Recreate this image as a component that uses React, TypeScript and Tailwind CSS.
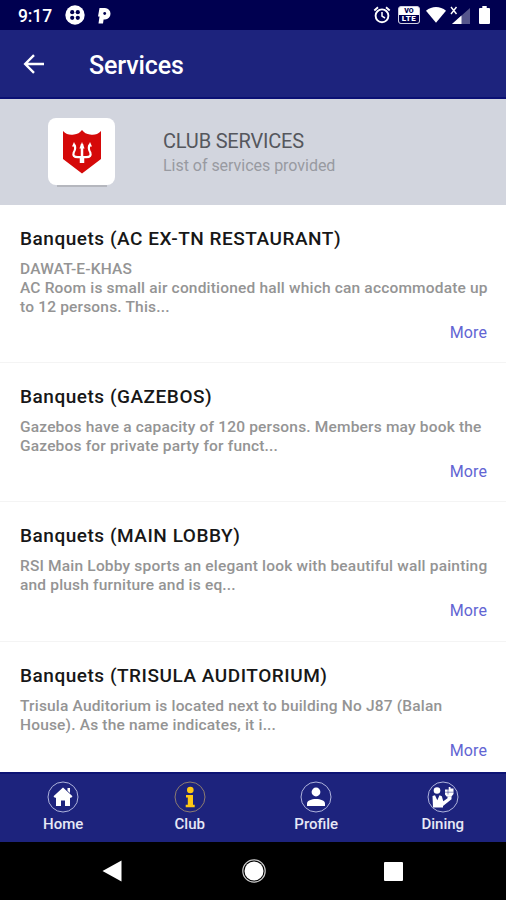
import React from "react";

type Service = { title: string; lines: string[]; height: string };

const services: Service[] = [
  {
    title: "Banquets (AC EX-TN RESTAURANT)",
    lines: ["DAWAT-E-KHAS", "AC Room is small air conditioned hall which can accommodate up", "to 12 persons. This..."],
    height: "h-[158px]",
  },
  {
    title: "Banquets (GAZEBOS)",
    lines: ["Gazebos have a capacity of 120 persons. Members may book the", "Gazebos for private party for funct..."],
    height: "h-[139px]",
  },
  {
    title: "Banquets (MAIN LOBBY)",
    lines: ["RSI Main Lobby sports an elegant look with beautiful wall painting", "and plush furniture and is eq..."],
    height: "h-[140px]",
  },
  {
    title: "Banquets (TRISULA AUDITORIUM)",
    lines: ["Trisula Auditorium is located next to building No J87 (Balan", "House). As the name indicates, it i..."],
    height: "h-[139px]",
  },
];

function StatusBar() {
  return (
    <div className="flex h-[30px] shrink-0 items-center bg-[#000050] pl-[18px] pr-[16px] text-white">
      <span className="mt-[2px] w-[34px] whitespace-nowrap text-[17.5px] font-medium leading-[30px] tracking-[-0.1px]">9:17</span>
      <svg className="ml-[13px]" width="20" height="20" viewBox="0 0 20 20">
        <circle cx="10" cy="10" r="9.700" fill="#fff" />
        <g fill="#000050">
          <circle cx="7.200" cy="7.200" r="2.100" />
          <circle cx="12.800" cy="7.200" r="2.100" />
          <circle cx="7.200" cy="12.800" r="2.100" />
          <circle cx="12.800" cy="12.800" r="2.100" />
        </g>
      </svg>
      <svg className="ml-[13px] mt-[1px]" width="13" height="16" viewBox="0 0 13 16">
        <path d="M1.500 0H7a5.500 5.700 0 0 1 0 11.400H5.600L5 15.500H.500L1.500 8.500H0Z" fill="#fff" />
        <circle cx="6.700" cy="5.500" r="1.400" fill="#000050" />
      </svg>
      <svg className="ml-auto" width="18" height="18" viewBox="0 0 18 18" fill="none" stroke="#fff">
        <circle cx="9" cy="9.800" r="6.400" strokeWidth="1.900" />
        <path d="M1.300 4.400 5 1.300M16.700 4.400 13 1.300" strokeWidth="1.900" />
        <path d="M9 6v4.200l3 1.800" strokeWidth="1.500" />
      </svg>
      <div className="ml-[7px] flex h-[18px] w-[22px] flex-col items-center overflow-hidden rounded-[3px] border border-[#cfcfe0] bg-white text-[7px] font-black leading-[8px]">
        <span className="h-[8px] leading-[8px] text-[#000050]">VO</span>
        <span className="h-[8px] w-full bg-[#000050] text-center text-[8px] leading-[8px] tracking-[0.4px] text-white">LTE</span>
      </div>
      <svg className="ml-[6px]" width="20" height="16" viewBox="0 0 20 16">
        <path d="M0 3.700C6-1.100 14-1.100 20 3.700L10 15.700Z" fill="#fff" />
      </svg>
      <svg className="ml-[4px]" width="20" height="19" viewBox="0 0 20 19">
        <path d="M20 2v16H2Z" fill="#55558b" />
        <path d="M11.500 9.500V18H2Z" fill="#fff" />
        <path d="M1 1l5.500 7M6.500 1 1 8" stroke="#fff" strokeWidth="1.400" />
      </svg>
      <svg className="ml-[9px]" width="11" height="18" viewBox="0 0 11 18">
        <path d="M3.300 0h4.400v2H10a1 1 0 0 1 1 1v14a1 1 0 0 1-1 1H1a1 1 0 0 1-1-1V3a1 1 0 0 1 1-1h2.300Z" fill="#fff" />
      </svg>
    </div>
  );
}

function TridentShield() {
  return (
    <svg width="38" height="44" viewBox="0 0 38 44">
      <path d="M0 1q5 5 11 3.500Q16 4 19 0q3 4 8 4.500Q33 6 38 1v28L19 43.500 0 29Z" fill="#d50909" />
      <g fill="none" stroke="#fff" strokeWidth="2.200">
        <path d="M11 14.500q2.500 3.500-.3 8-1.500 4.700 4 4.700h8.600q5.500 0 4-4.700-2.800-4.500-.3-8" />
        <path d="M19 14v14" strokeWidth="2.500" />
        <path d="M19 27v6" strokeWidth="4.500" />
      </g>
      <path d="M19 12l2.600 6.500h-5.200ZM11 12l2 4.500h-4ZM27 12l2 4.500h-4Z" fill="#fff" />
    </svg>
  );
}

function ServiceRow({ title, lines, height }: Service) {
  return (
    <article className={`flex shrink-0 flex-col border-b border-[#f4f4f4] px-[20px] pt-[22px] ${height}`}>
      <h2 className="whitespace-nowrap text-[19px] font-medium leading-[24px] tracking-[0.53px] text-[#171717]">{title}</h2>
      <div className="mt-[9px] text-[15.5px] font-medium leading-[19px] tracking-[0.18px] text-[#949494]">
        {lines.map((line) => (
          <p key={line} className="whitespace-nowrap">{line}</p>
        ))}
      </div>
      <a className="-mr-px mt-[6px] self-end text-[16px] leading-[20px] tracking-[0.1px] text-[#6265d3]">More</a>
    </article>
  );
}

const glyphs: Record<string, React.ReactNode> = {
  Home: <path d="M16 6.500l9.500 8.700-1.300 1.500H23V25h-5v-5.500h-4V25H9v-8.300H7.800l-1.300-1.500Zm4.500.5H23v5l-2.500-2.300Z" fill="#fff" />,
  Club: (
    <g fill="#ffc815">
      <circle cx="16.300" cy="9" r="3.300" />
      <path d="M12 14h7v9.700h1.700V26.200h-9v-2.500h2.100v-7.200H12Z" />
    </g>
  ),
  Profile: (
    <g fill="#fff">
      <circle cx="16" cy="11" r="4.400" />
      <path d="M7 25v-2.500c0-6 18-6 18 0V25Z" />
    </g>
  ),
  Dining: (
    <g fill="#fff">
      <circle cx="10" cy="9.500" r="3.300" />
      <path d="M5.500 15 8 14.300l2.300 5 2.200-5 2.300.9 1.500 5 4.200-3v-2h4v3L16 25v1.500H6Z" />
      <path d="M18 8.500h3.700V6h1.800v1.500h3V13l-2 2.500h-5L18 13.500Z" />
      <path d="M18 11.200h8.500M21 8v5.500" stroke="#1d237d" strokeWidth=".5" />
    </g>
  ),
};

function NavItem({ label }: { label: string }) {
  return (
    <button className="flex flex-1 flex-col items-center pt-[7px]">
      <svg width="32" height="32" viewBox="0 0 32 32">
        <circle cx="16" cy="16" r="15" fill="none" stroke={label === "Club" ? "#8d7c70" : "#aeb3dc"} strokeWidth="1" />
        {glyphs[label]}
      </svg>
      <span className="mt-[1px] text-[15px] font-medium leading-[20px] text-[#e7e8f6]">{label}</span>
    </button>
  );
}

export default function App() {
  return (
    <div className="flex h-[900px] w-[506px] flex-col overflow-hidden bg-white font-[Roboto,sans-serif]">
      <StatusBar />
      <header className="flex h-[69px] shrink-0 items-center border-b-2 border-[#0b1074] bg-[#1d237d] pl-[23px] text-white">
        <svg width="22" height="20" viewBox="0 0 22 20" fill="none" stroke="#fff" strokeWidth="2.400">
          <path d="M21 10H2.500M11 1.200 2.200 10 11 18.800" />
        </svg>
        <h1 className="ml-[44px] mt-[5px] text-[25px] font-medium leading-[30px] tracking-[-0.1px]">Services</h1>
      </header>
      <section className="flex h-[106px] shrink-0 items-center bg-[#d2d5de] pl-[48px]">
        <div className="flex flex-col items-center">
          <div className="flex size-[67px] items-center justify-center rounded-[8px] bg-white pt-[2px]">
            <TridentShield />
          </div>
          <div className="h-[2px] w-[50px] bg-[#b5b7be]" />
        </div>
        <div className="ml-[48px] mt-[3px]">
          <p className="text-[20px] leading-[25px] tracking-[-0.2px] text-[#55575d]">CLUB SERVICES</p>
          <p className="text-[16px] leading-[24px] tracking-[-0.03px] text-[#989aa1]">List of services provided</p>
        </div>
      </section>
      <main className="flex h-[567px] shrink-0 flex-col overflow-hidden">
        {services.map((service) => (
          <ServiceRow key={service.title} {...service} />
        ))}
      </main>
      <nav className="flex h-[70px] shrink-0 border-t-2 border-[#0c1374] bg-[#1d237d]">
        {["Home", "Club", "Profile", "Dining"].map((label) => (
          <NavItem key={label} label={label} />
        ))}
      </nav>
      <footer className="flex h-[58px] shrink-0 items-center bg-black pl-[102px]">
        <svg width="20" height="22" viewBox="0 0 20 22">
          <path d="M19.500.5v21L.5 11Z" fill="#fff" />
        </svg>
        <svg className="ml-[120px]" width="24" height="24" viewBox="0 0 24 24">
          <circle cx="12" cy="12" r="9.500" fill="#fff" />
          <circle cx="12" cy="12" r="11.200" fill="none" stroke="#ccc" strokeWidth="1.200" />
        </svg>
        <div className="ml-[118px] size-[19px] rounded-[1px] bg-white" />
      </footer>
    </div>
  );
}
